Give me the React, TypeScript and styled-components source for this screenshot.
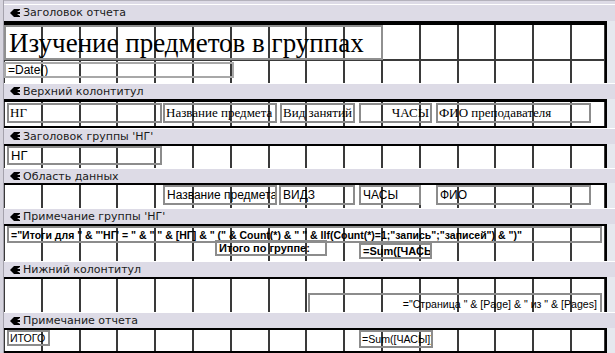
import styled, { createGlobalStyle } from "styled-components";

const Global = createGlobalStyle`
  html, body { margin: 0; padding: 0; background: #e6e8ee; }
`;

const Window = styled.div`
  width: 615px;
  height: 353px;
  overflow: hidden;
  display: flex;
  background: #e6e8ee;
`;// whole design surface

const LeftStrip = styled.div`
  width: 3px;
  background: #d6d4de;
  border-right: 1px solid #a4a2ac;
`;

const Column = styled.div`
  flex: 1;
  display: flex;
  flex-direction: column;
`;

const Header = styled.div<{ $h: number }>`
  height: ${(p) => p.$h}px;
  box-sizing: border-box;
  background: #dddbe6;
  border-top: 1px solid #ffffff;
  display: flex;
  align-items: center;
  gap: 3px;
  padding-left: 6px;
  font-family: "DejaVu Sans", sans-serif;
  font-size: 11px;
  color: #1a1a1a;
`;// section bar

const FirstHeader = styled(Header)`
  border-top: none;
  box-shadow: inset 0 1px 0 #b4b2bc, inset 0 4px 0 #dddbe6, inset 0 5px 0 #ffffff;
  padding-top: 5px;
`;

const Body = styled.div<{ $h: number }>`
  height: ${(p) => p.$h}px;
  display: flex;
  box-sizing: border-box;
  overflow: hidden;
`;

const Canvas = styled.div<{ $top: number; $bottom?: number }>`
  position: relative;
  width: 601px;
  box-sizing: border-box;
  background-color: #fff;
  border-top: ${(p) => p.$top}px solid #000;
  border-bottom: ${(p) => p.$bottom || 0}px solid #000;
  background-origin: border-box;
  background-image:
    repeating-linear-gradient(to right, #3a3a3a 0 2px, transparent 2px 37.8px),
    repeating-linear-gradient(to bottom, #3a3a3a 0 2px, transparent 2px 38px);
  background-position: -1px 0, 0 0;
`;// grid of 1cm lines

const Outside = styled.div`
  flex: 1;
  border-left: 2px solid #000;
  background: #e6e8ee;
`;

const Ctl = styled.div<{ $x: number; $y: number; $w: number; $h: number; $right?: boolean }>`
  position: absolute;
  left: ${(p) => p.$x}px;
  top: ${(p) => p.$y}px;
  width: ${(p) => p.$w}px;
  height: ${(p) => p.$h}px;
  box-sizing: border-box;
  border: 2px solid #8c8c8c;
  padding: 0 2px;
  display: flex;
  align-items: center;
  justify-content: ${(p) => (p.$right ? "flex-end" : "flex-start")};
  white-space: nowrap;
  overflow: hidden;
  color: #000;
  font-family: "Liberation Sans", Arial, sans-serif;
  font-size: 12px;
`;// text box / label on the canvas

const SmallCtl = styled(Ctl)`
  font-size: 10.6px;
  padding: 0 1px;
`;

const SerifCtl = styled(Ctl)`
  font-family: "Liberation Serif", "Times New Roman", serif;
  font-size: 13px;
  padding: 0 1px;
`;

const BoldCtl = styled(Ctl)`
  font-weight: bold;
  font-size: 10.5px;
`;

const TitleCtl = styled(SerifCtl)`
  font-size: 27px;
  padding: 2px 3px 0;
  border-color: #909090;
`;

const Icon = () => (
  <svg width="10" height="8" viewBox="0 0 10 8">
    <polygon points="0,4 4,0 10,0 10,1 7,3 10,3 10,5 7,5 10,7 10,8 4,8" fill="#000" />
  </svg>
);

type Props = { title: string; first?: boolean };
function Bar({ title, first }: Props) {
  const H = first ? FirstHeader : Header;
  return (
    <H $h={first ? 21 : 16}>
      <Icon />
      <span>{title}</span>
    </H>
  );
}

function Section({ h, top, bottom, children }: { h: number; top: number; bottom?: number; children?: React.ReactNode }) {
  return (
    <Body $h={h}>
      <Canvas $top={top} $bottom={bottom}>{children}</Canvas>
      <Outside />
    </Body>
  );
}

export default function App() {
  return (
    <Window>
      <Global />
      <LeftStrip />
      <Column>
        <Bar first title="Заголовок отчета" />
        <Section h={62} top={4}>
          <TitleCtl $x={0} $y={0} $w={379} $h={35}>Изучение предметов в группах</TitleCtl>
          <Ctl $x={0} $y={37} $w={230} $h={16} style={{ borderColor: "#a8a8a8" }}>=Date()</Ctl>
        </Section>

        <Bar title="Верхний колонтитул" />
        <Section h={29} top={3} bottom={2}>
          <SerifCtl $x={3} $y={1} $w={155} $h={20}>НГ</SerifCtl>
          <SerifCtl $x={159} $y={1} $w={114} $h={20}>Название предмета</SerifCtl>
          <SerifCtl $x={276} $y={1} $w={75} $h={20}>Вид занятий</SerifCtl>
          <SerifCtl $x={355} $y={1} $w={73} $h={20} $right>ЧАСЫ</SerifCtl>
          <SerifCtl $x={432} $y={1} $w={155} $h={20}>ФИО преподавателя</SerifCtl>
        </Section>

        <Bar title="Заголовок группы 'НГ'" />
        <Section h={24} top={2}>
          <Ctl $x={3} $y={0} $w={155} $h={19} style={{ fontSize: 13 }}>НГ</Ctl>
        </Section>

        <Bar title="Область данных" />
        <Section h={25} top={2}>
          <Ctl $x={159} $y={0} $w={114} $h={20}>Название предмета</Ctl>
          <Ctl $x={275} $y={0} $w={76} $h={20}>ВИДЗ</Ctl>
          <Ctl $x={355} $y={0} $w={62} $h={20}>ЧАСЫ</Ctl>
          <Ctl $x={432} $y={0} $w={155} $h={20}>ФИО</Ctl>
        </Section>

        <Bar title="Примечание группы 'НГ'" />
        <Section h={37} top={2}>
          <BoldCtl $x={3} $y={0} $w={595} $h={17}>
            ="Итоги для " &amp; "'НГ' = " &amp; " " &amp; [НГ] &amp; " (" &amp; Count(*) &amp; " " &amp; IIf(Count(*)=1;"запись";"записей") &amp; ")"
          </BoldCtl>
          <BoldCtl $x={211} $y={14} $w={112} $h={16} style={{ fontSize: 11 }}>Итого по группе:</BoldCtl>
          <BoldCtl $x={355} $y={17} $w={73} $h={16} style={{ fontSize: 11 }}>=Sum([ЧАСЫ])</BoldCtl>
        </Section>

        <Bar title="Нижний колонтитул" />
        <Section h={35} top={2}>
          <SmallCtl $x={304} $y={14} $w={294} $h={24} $right style={{ alignItems: "flex-start", paddingTop: 3, paddingRight: 3 }}>
            ="Страница " &amp; [Page] &amp; " из " &amp; [Pages]
          </SmallCtl>
        </Section>

        <Bar title="Примечание отчета" />
        <Section h={25} top={2} bottom={2}>
          <SmallCtl $x={3} $y={0} $w={43} $h={16}>ИТОГО</SmallCtl>
          <SmallCtl $x={355} $y={0} $w={74} $h={18}>=Sum([ЧАСЫ])</SmallCtl>
        </Section>
      </Column>
    </Window>
  );
}
